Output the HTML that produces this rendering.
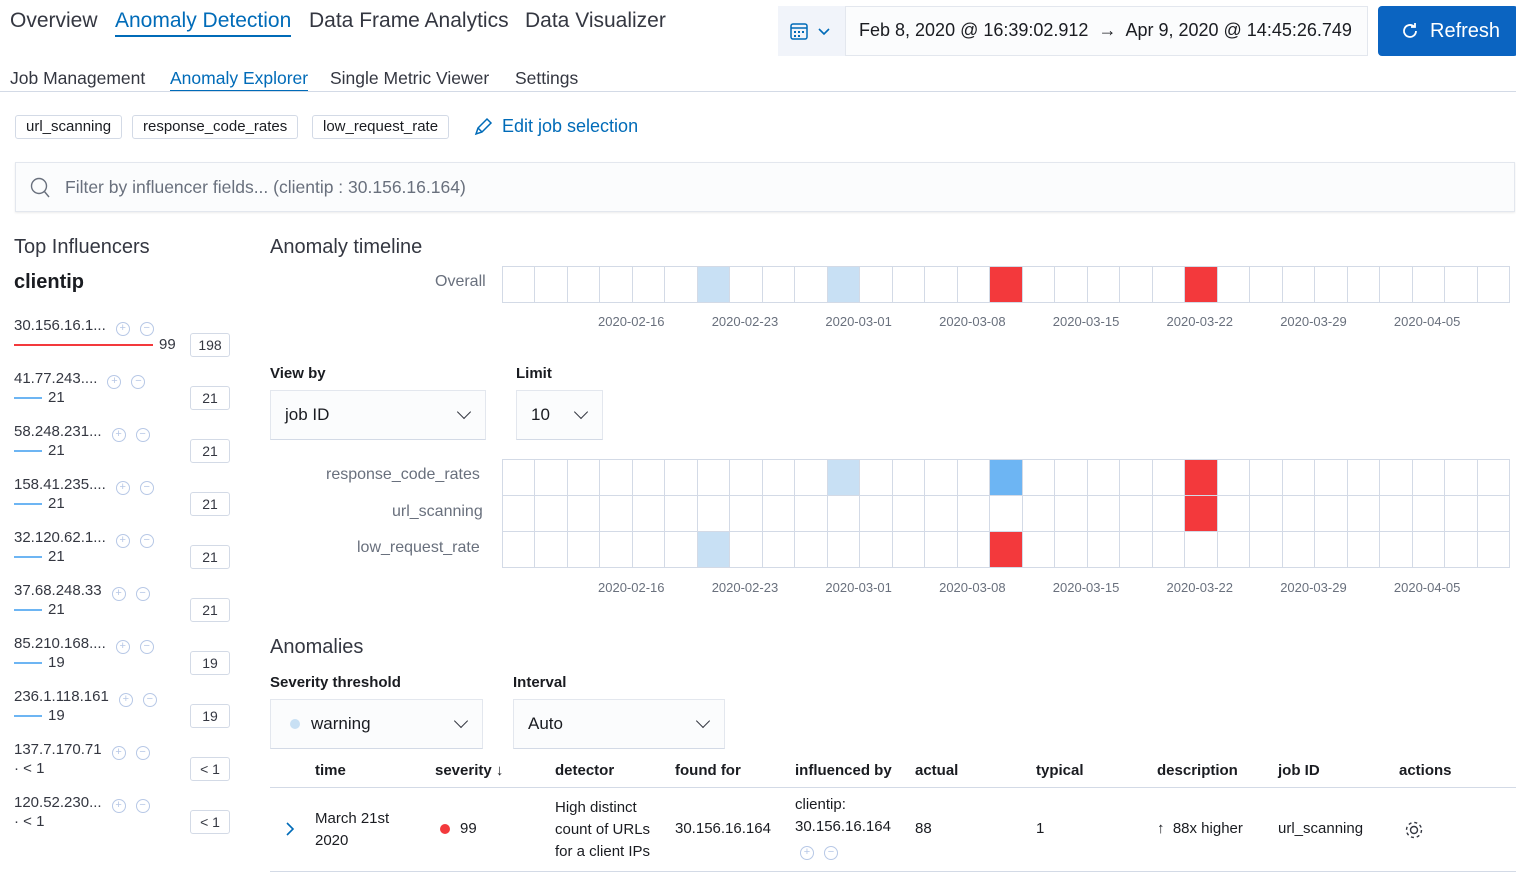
<!DOCTYPE html>
<html><head><meta charset="utf-8"><style>
*{box-sizing:border-box;margin:0;padding:0}
body{width:1516px;height:873px;overflow:hidden;background:#fff;font-family:"Liberation Sans",sans-serif;color:#343741;position:relative}
.a{position:absolute;white-space:nowrap}
.blue{color:#006bb8}
.tag{position:absolute;top:115px;height:24px;border:1px solid #d3dae6;border-radius:3px;font-size:15px;line-height:22px;padding:0 10px;color:#1a1c21}
.grid{position:absolute;left:502px;width:1008px;border-top:1px solid #d3dae6;border-left:1px solid #d3dae6}
.row{display:flex;height:36px}
.c{flex:1;border-right:1px solid #d3dae6;border-bottom:1px solid #d3dae6}
.lb{background:#c8e0f4}.mb{background:#6db5f3}.rd{background:#f3393c}
.ax{position:absolute;font-size:13px;color:#69707d}
.inf{position:absolute;left:14px;font-size:15px}
.pm{display:inline-block;width:14px;height:14px;border:1px solid #b7c8e6;border-radius:50%;margin-left:10px;vertical-align:-1px;color:#b7c8e6;font-size:11px;line-height:11px;text-align:center}
.cnt{position:absolute;left:190px;width:40px;height:24px;border:1px solid #d3dae6;border-radius:3px;font-size:14px;text-align:center;line-height:22px}
.sel{position:absolute;height:50px;border:1px solid #e3e7ee;background:#fbfcfd;border-bottom:1px solid #d3dae6;font-size:17px;line-height:48px;padding-left:14px;color:#1a1c21}
.chev{position:absolute;right:16px;top:16px;width:10px;height:10px;border-right:1.6px solid #343741;border-bottom:1.6px solid #343741;transform:rotate(45deg)}
.th{position:absolute;top:762px;font-size:15px;font-weight:bold;color:#1a1c21}
.td{position:absolute;font-size:15px;color:#1a1c21}
</style></head><body>
<div class="a" style="left:10px;top:9px;font-size:21px">Overview</div>
<div class="a blue" style="left:115px;top:9px;font-size:21px;border-bottom:2px solid #006bb8;padding-bottom:2px">Anomaly Detection</div>
<div class="a" style="left:309px;top:9px;font-size:21px">Data Frame Analytics</div>
<div class="a" style="left:525px;top:9px;font-size:21px">Data Visualizer</div>
<div class="a" style="left:778px;top:6px;width:590px;height:50px;border:1px solid #e3e7ee;background:#fbfcfd"></div>
<div class="a" style="left:778px;top:6px;width:68px;height:50px;border-right:1px solid #e3e7ee;background:#f1f4fa"></div>
<svg class="a" style="left:790px;top:22px" width="44" height="20"><rect x="1" y="2" width="16" height="15" rx="2" fill="none" stroke="#006bb8" stroke-width="1.5"/><line x1="1" y1="6" x2="17" y2="6" stroke="#006bb8" stroke-width="1.5"/><g fill="#006bb8"><rect x="4" y="9" width="2" height="2"/><rect x="8" y="9" width="2" height="2"/><rect x="12" y="9" width="2" height="2"/><rect x="4" y="13" width="2" height="2"/><rect x="8" y="13" width="2" height="2"/></g><path d="M29 7l5 5 5-5" fill="none" stroke="#006bb8" stroke-width="1.6"/></svg>
<div class="a" style="left:859px;top:20px;font-size:18px;color:#1a1c21">Feb 8, 2020 @ 16:39:02.912 &nbsp;→&nbsp; Apr 9, 2020 @ 14:45:26.749</div>
<div class="a" style="left:1378px;top:6px;width:140px;height:50px;background:#0b64c1;border-radius:4px;color:#fff;font-size:20px;line-height:50px;padding-left:52px">Refresh</div>
<svg class="a" style="left:1400px;top:21px" width="20" height="20"><path d="M16 10a6 6 0 1 1-2-4.5" fill="none" stroke="#fff" stroke-width="1.8"/><path d="M15 2v4h-4" fill="none" stroke="#fff" stroke-width="1.8"/></svg>
<div class="a" style="left:10px;top:68px;font-size:17.5px">Job Management</div>
<div class="a blue" style="left:170px;top:68px;font-size:17.5px;border-bottom:2px solid #006bb8;padding-bottom:1px">Anomaly Explorer</div>
<div class="a" style="left:330px;top:68px;font-size:17.5px">Single Metric Viewer</div>
<div class="a" style="left:515px;top:68px;font-size:17.5px">Settings</div>
<div class="a" style="left:0;top:91px;width:1516px;height:1px;background:#d3dae6"></div>
<div class="tag" style="left:15px">url_scanning</div>
<div class="tag" style="left:132px">response_code_rates</div>
<div class="tag" style="left:312px">low_request_rate</div>
<svg class="a" style="left:473px;top:117px" width="20" height="20"><path d="M3 17l2-6 9-9 4 4-9 9z M5 11l4 4" fill="none" stroke="#006bb8" stroke-width="1.5"/></svg>
<div class="a blue" style="left:502px;top:116px;font-size:18px">Edit job selection</div>
<div class="a" style="left:15px;top:162px;width:1500px;height:50px;background:#fbfcfd;border:1px solid #e3e7ee;box-shadow:0 1px 2px rgba(0,0,0,.08)"></div>
<svg class="a" style="left:29px;top:177px" width="22" height="22"><circle cx="10" cy="9" r="7.5" fill="none" stroke="#69707d" stroke-width="1.4"/><path d="M15 14l5 6" stroke="#69707d" stroke-width="1.4"/></svg>
<div class="a" style="left:65px;top:177px;font-size:17.5px;color:#69707d">Filter by influencer fields... (clientip : 30.156.16.164)</div>

<div class="a" style="left:14px;top:236px;font-size:20px;color:#343741">Top Influencers</div>
<div class="a" style="left:14px;top:271px;font-size:20px;font-weight:bold;color:#1a1c21">clientip</div>
<div class="inf" style="top:317px">30.156.16.1...<span class="pm">+</span><span class="pm">−</span></div>
<div class="a" style="left:14px;top:344px;width:139px;height:2px;background:#f3393c"></div>
<div class="a" style="left:159px;top:336px;font-size:15px">99</div>
<div class="cnt" style="top:333px">198</div>
<div class="inf" style="top:370px">41.77.243....<span class="pm">+</span><span class="pm">−</span></div>
<div class="inf" style="top:423px">58.248.231...<span class="pm">+</span><span class="pm">−</span></div>
<div class="inf" style="top:476px">158.41.235....<span class="pm">+</span><span class="pm">−</span></div>
<div class="inf" style="top:529px">32.120.62.1...<span class="pm">+</span><span class="pm">−</span></div>
<div class="inf" style="top:582px">37.68.248.33<span class="pm">+</span><span class="pm">−</span></div>
<div class="inf" style="top:635px">85.210.168....<span class="pm">+</span><span class="pm">−</span></div>
<div class="inf" style="top:688px">236.1.118.161<span class="pm">+</span><span class="pm">−</span></div>
<div class="inf" style="top:741px">137.7.170.71<span class="pm">+</span><span class="pm">−</span></div>
<div class="inf" style="top:794px">120.52.230...<span class="pm">+</span><span class="pm">−</span></div>
<div class="a" style="left:14px;top:397px;width:28px;height:2px;background:#6db5f3"></div><div class="a" style="left:48px;top:389px;font-size:15px">21</div><div class="cnt" style="top:386px">21</div>
<div class="a" style="left:14px;top:450px;width:28px;height:2px;background:#6db5f3"></div><div class="a" style="left:48px;top:442px;font-size:15px">21</div><div class="cnt" style="top:439px">21</div>
<div class="a" style="left:14px;top:503px;width:28px;height:2px;background:#6db5f3"></div><div class="a" style="left:48px;top:495px;font-size:15px">21</div><div class="cnt" style="top:492px">21</div>
<div class="a" style="left:14px;top:556px;width:28px;height:2px;background:#6db5f3"></div><div class="a" style="left:48px;top:548px;font-size:15px">21</div><div class="cnt" style="top:545px">21</div>
<div class="a" style="left:14px;top:609px;width:28px;height:2px;background:#6db5f3"></div><div class="a" style="left:48px;top:601px;font-size:15px">21</div><div class="cnt" style="top:598px">21</div>
<div class="a" style="left:14px;top:662px;width:28px;height:2px;background:#6db5f3"></div><div class="a" style="left:48px;top:654px;font-size:15px">19</div><div class="cnt" style="top:651px">19</div>
<div class="a" style="left:14px;top:715px;width:28px;height:2px;background:#6db5f3"></div><div class="a" style="left:48px;top:707px;font-size:15px">19</div><div class="cnt" style="top:704px">19</div>
<div class="a" style="left:14px;top:760px;font-size:15px">· &lt; 1</div><div class="cnt" style="top:757px">&lt; 1</div>
<div class="a" style="left:14px;top:813px;font-size:15px">· &lt; 1</div><div class="cnt" style="top:810px">&lt; 1</div>

<div class="a" style="left:270px;top:236px;font-size:20px">Anomaly timeline</div>
<div class="a" style="left:435px;top:273px;font-size:16px;color:#69707d">Overall</div>
<div class="grid" style="top:266px" id="g1"></div>
<div class="a" style="left:270px;top:365px;font-size:15px;font-weight:bold;color:#1a1c21">View by</div>
<div class="a" style="left:516px;top:365px;font-size:15px;font-weight:bold;color:#1a1c21">Limit</div>
<div class="sel" style="left:270px;top:390px;width:216px">job ID<span class="chev"></span></div>
<div class="sel" style="left:516px;top:390px;width:87px">10<span class="chev"></span></div>
<div class="a" style="left:326px;top:466px;font-size:16px;color:#69707d">response_code_rates</div>
<div class="a" style="left:392px;top:503px;font-size:16px;color:#69707d">url_scanning</div>
<div class="a" style="left:357px;top:539px;font-size:16px;color:#69707d">low_request_rate</div>
<div class="grid" style="top:459px" id="g2"></div>

<div class="a" style="left:270px;top:636px;font-size:20px">Anomalies</div>
<div class="a" style="left:270px;top:674px;font-size:15px;font-weight:bold;color:#1a1c21">Severity threshold</div>
<div class="a" style="left:513px;top:674px;font-size:15px;font-weight:bold;color:#1a1c21">Interval</div>
<div class="sel" style="left:270px;top:699px;width:213px;padding-left:40px">warning<span class="chev"></span></div>
<div class="a" style="left:290px;top:719px;width:10px;height:10px;border-radius:50%;background:#c8e0f4"></div>
<div class="sel" style="left:513px;top:699px;width:212px">Auto<span class="chev"></span></div>
<div class="th" style="left:315px">time</div>
<div class="th" style="left:435px">severity ↓</div>
<div class="th" style="left:555px">detector</div>
<div class="th" style="left:675px">found for</div>
<div class="th" style="left:795px">influenced by</div>
<div class="th" style="left:915px">actual</div>
<div class="th" style="left:1036px">typical</div>
<div class="th" style="left:1157px">description</div>
<div class="th" style="left:1278px">job ID</div>
<div class="th" style="left:1399px">actions</div>
<div class="a" style="left:270px;top:787px;width:1246px;height:1px;background:#d3dae6"></div>
<div class="a" style="left:270px;top:871px;width:1246px;height:1px;background:#d3dae6"></div>
<svg class="a" style="left:284px;top:821px" width="12" height="16"><path d="M3 2l6 6-6 6" fill="none" stroke="#006bb8" stroke-width="1.6"/></svg>
<div class="td" style="left:315px;top:808px;line-height:22px">March 21st<br>2020</div>
<div class="a" style="left:440px;top:824px;width:10px;height:10px;border-radius:50%;background:#f3393c"></div>
<div class="td" style="left:460px;top:820px">99</div>
<div class="td" style="left:555px;top:797px;line-height:22px">High distinct<br>count of URLs<br>for a client IPs</div>
<div class="td" style="left:675px;top:820px">30.156.16.164</div>
<div class="td" style="left:795px;top:794px;line-height:22px">clientip:<br>30.156.16.164</div>
<div class="a" style="left:790px;top:841px"><span class="pm">+</span><span class="pm">−</span></div>
<div class="td" style="left:915px;top:820px">88</div>
<div class="td" style="left:1036px;top:820px">1</div>
<div class="td" style="left:1157px;top:820px">↑ &nbsp;88x higher</div>
<div class="td" style="left:1278px;top:820px">url_scanning</div>
<svg class="a" style="left:1403px;top:819px" width="22" height="22"><circle cx="11" cy="11" r="3.5" fill="none" stroke="#343741" stroke-width="1.4"/><circle cx="11" cy="11" r="7.5" fill="none" stroke="#343741" stroke-width="1.4" stroke-dasharray="3 2.9"/></svg>
<script>
function g(id,rows){var e=document.getElementById(id);rows.forEach(function(r){var d=document.createElement('div');d.className='row';for(var i=0;i<31;i++){var c=document.createElement('div');c.className='c '+(r[i]||'');d.appendChild(c)}e.appendChild(d)})}
g('g1',[{6:'lb',10:'lb',15:'rd',21:'rd'}]);
g('g2',[{10:'lb',15:'mb',21:'rd'},{21:'rd'},{6:'lb',15:'rd'}]);
var L=['2020-02-16','2020-02-23','2020-03-01','2020-03-08','2020-03-15','2020-03-22','2020-03-29','2020-04-05'];
[314,580].forEach(function(y){L.forEach(function(t,i){var d=document.createElement('div');d.className='ax';d.style.left=(598+i*113.7)+'px';d.style.top=y+'px';d.textContent=t;document.body.appendChild(d)})});
</script>
</body></html>
